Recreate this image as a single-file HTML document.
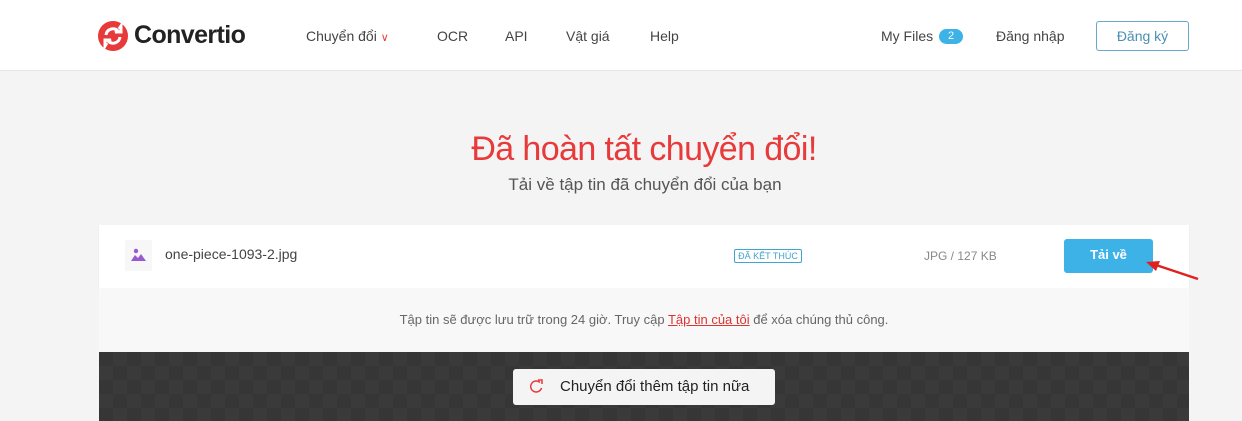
<!DOCTYPE html>
<html><head><meta charset="utf-8"><style>
*{margin:0;padding:0;box-sizing:border-box}
body{width:1242px;height:421px;overflow:hidden;background:#f4f4f4;font-family:"Liberation Sans","DejaVu Sans",sans-serif;position:relative;color:#333}
.hdr{position:absolute;left:0;top:0;width:1242px;height:71px;background:#fff;border-bottom:1px solid #e6e6e6}
.a{position:absolute;font-size:14px;color:#444;top:28px}
h1{position:absolute;top:130px;width:1242px;left:23px;text-align:center;font-weight:normal;font-size:34px;color:#e83a3a;letter-spacing:-0.6px}
.sub{position:absolute;top:175px;left:0;width:1290px;text-align:center;font-size:17px;color:#555}
.card{position:absolute;left:99px;top:225px;width:1090px;height:63px;background:#fff;box-shadow:0 1px 2px rgba(0,0,0,.05)}
.info{position:absolute;left:99px;top:288px;width:1090px;height:64px;background:#f8f8f8;text-align:center;font-size:13px;color:#666;padding-top:24px}
.dark{position:absolute;left:99px;top:352px;width:1090px;height:69px;background-color:#363636;background-image:linear-gradient(45deg,#3a3a3a 25%,transparent 25%,transparent 75%,#3a3a3a 75%),linear-gradient(45deg,#3a3a3a 25%,transparent 25%,transparent 75%,#3a3a3a 75%);background-size:28px 28px;background-position:0 0,14px 14px}
</style></head><body>
<div class="hdr">
<svg style="position:absolute;left:98px;top:21px" width="30" height="30" viewBox="0 0 30 30"><circle cx="15" cy="15" r="15" fill="#e83a3a"/><path d="M8 14a7 7 0 0 1 12-4l-3 1h6V5l-2 3" fill="none" stroke="#fff" stroke-width="3"/><path d="M22 16a7 7 0 0 1-12 4l3-1H7v6l2-3" fill="none" stroke="#fff" stroke-width="3"/></svg>
<div style="position:absolute;left:134px;top:21px;font-size:25px;font-weight:bold;color:#222;letter-spacing:-0.6px">Convertio</div>
<div class="a" style="left:306px">Chuyển đổi <span style="color:#e83a3a;font-size:11px">&#8744;</span></div>
<div class="a" style="left:437px">OCR</div>
<div class="a" style="left:505px">API</div>
<div class="a" style="left:566px">Vật giá</div>
<div class="a" style="left:650px">Help</div>
<div class="a" style="left:881px">My Files</div>
<div style="position:absolute;left:939px;top:29px;width:24px;height:15px;border-radius:8px;background:#3cb2e6;color:#fff;font-size:11px;text-align:center;line-height:15px">2</div>
<div class="a" style="left:996px">Đăng nhập</div>
<div style="position:absolute;left:1096px;top:21px;width:93px;height:30px;border:1px solid #6aa6c5;border-radius:3px;color:#4a8fb3;font-size:14px;text-align:center;line-height:28px">Đăng ký</div>
</div>
<h1>Đã hoàn tất chuyển đổi!</h1>
<div class="sub">Tải về tập tin đã chuyển đổi của bạn</div>
<div class="card">
<div style="position:absolute;left:26px;top:15px;width:27px;height:31px;background:#f7f7f7;border-radius:2px"></div>
<svg style="position:absolute;left:32px;top:23px" width="15" height="14" viewBox="0 0 15 14"><circle cx="5" cy="3" r="2.2" fill="#9b59d0"/><path d="M0 13L4 7l3 3 3-4 5 7z" fill="#9b59d0"/></svg>
<div style="position:absolute;left:66px;top:21px;font-size:14px;color:#444">one-piece-1093-2.jpg</div>
<div style="position:absolute;left:635px;top:24px;width:68px;height:14px;border:1px solid #3fa5c9;border-radius:2px;color:#3fa5c9;font-size:9px;line-height:12px;text-align:center;white-space:nowrap">ĐÃ KẾT THÚC</div>
<div style="position:absolute;left:825px;top:24px;font-size:12px;color:#888">JPG / 127 KB</div>
<div style="position:absolute;left:965px;top:14px;width:89px;height:34px;background:#3cb2e6;border-radius:3px;color:#fff;font-size:13px;font-weight:bold;text-align:center;line-height:32px">Tải về</div>
</div>
<svg style="position:absolute;left:1140px;top:255px" width="65" height="30"><path d="M58 24L16 10" stroke="#e02020" stroke-width="2.5"/><path d="M6 7l14-1-4 10z" fill="#e02020"/></svg>
<div class="info">Tập tin sẽ được lưu trữ trong 24 giờ. Truy cập <span style="color:#d33;text-decoration:underline">Tập tin của tôi</span> để xóa chúng thủ công.</div>
<div class="dark"></div>
<div style="position:absolute;left:513px;top:369px;width:262px;height:36px;background:#f4f4f4;border-radius:3px;font-size:15px;color:#222;line-height:36px;padding-left:47px">Chuyển đổi thêm tập tin nữa</div>
<svg style="position:absolute;left:529px;top:379px" width="15" height="15" viewBox="0 0 15 15"><path d="M12.5 9A5.5 5.5 0 1 1 11 3.5" fill="none" stroke="#e83a3a" stroke-width="1.5"/><path d="M9 1h4v4" fill="none" stroke="#e83a3a" stroke-width="1.5"/></svg>
</body></html>
